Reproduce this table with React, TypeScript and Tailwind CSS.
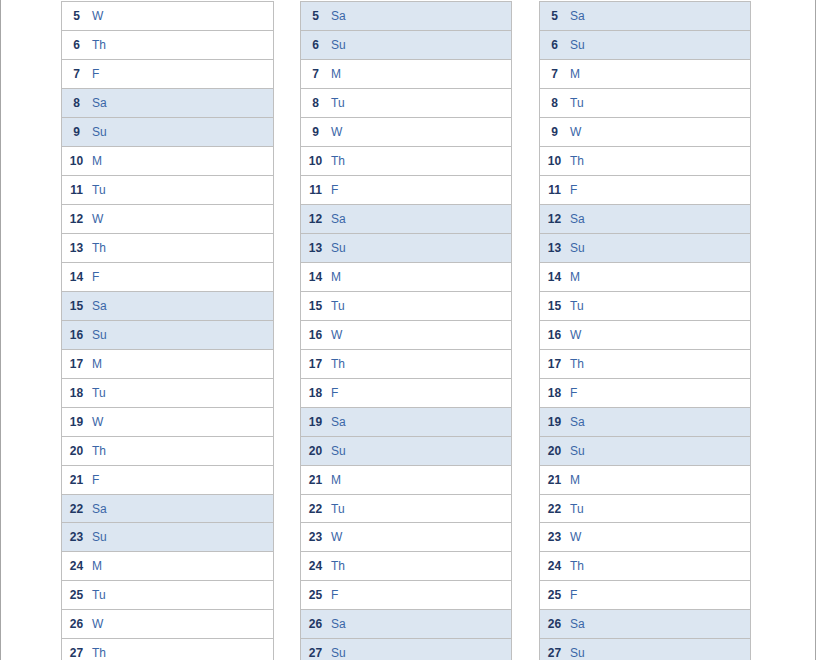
import React from "react";

const DAYS = ["Su", "M", "Tu", "W", "Th", "F", "Sa"];

type Month = { firstDay: number; width: string; margin: string };

// firstDay: weekday index of the 1st of the month (0 = Sunday)
const months: Month[] = [
  { firstDay: 6, width: "w-[213px]", margin: "" },
  { firstDay: 2, width: "w-[212px]", margin: "ml-[26px]" },
  { firstDay: 2, width: "w-[212px]", margin: "ml-[27px]" },
];

function MonthColumn({ month }: { month: Month }) {
  const rows = [];
  for (let d = 5; d <= 28; d++) {
    const wd = (month.firstDay + d - 1) % 7;
    const weekend = wd === 0 || wd === 6;
    rows.push(
      <div
        key={d}
        className={`flex items-center border-t border-[#bfbfbf] ${d === 22 ? "h-[28px]" : "h-[29px]"} ${
          weekend ? "bg-[#dce6f1]" : "bg-white"
        }`}
      >
        <div className="w-[29px] text-center font-bold text-[#1f3864]">{d}</div>
        <div className="pl-[1px] text-[#3a66a7]">{DAYS[wd]}</div>
      </div>
    );
  }
  return (
    <div className={`${month.width} ${month.margin} border-x border-[#bfbfbf] shrink-0`}>
      {rows}
    </div>
  );
}

export default function App() {
  return (
    <div
      className="w-[816px] h-[660px] overflow-hidden bg-white border-x border-[#a6a6a6] text-[12px] leading-none"
      style={{ fontFamily: '"Liberation Sans", Arial, sans-serif' }}
    >
      <div className="flex pl-[60px] pt-[1px]">
        {months.map((m, i) => (
          <MonthColumn key={i} month={m} />
        ))}
      </div>
    </div>
  );
}
